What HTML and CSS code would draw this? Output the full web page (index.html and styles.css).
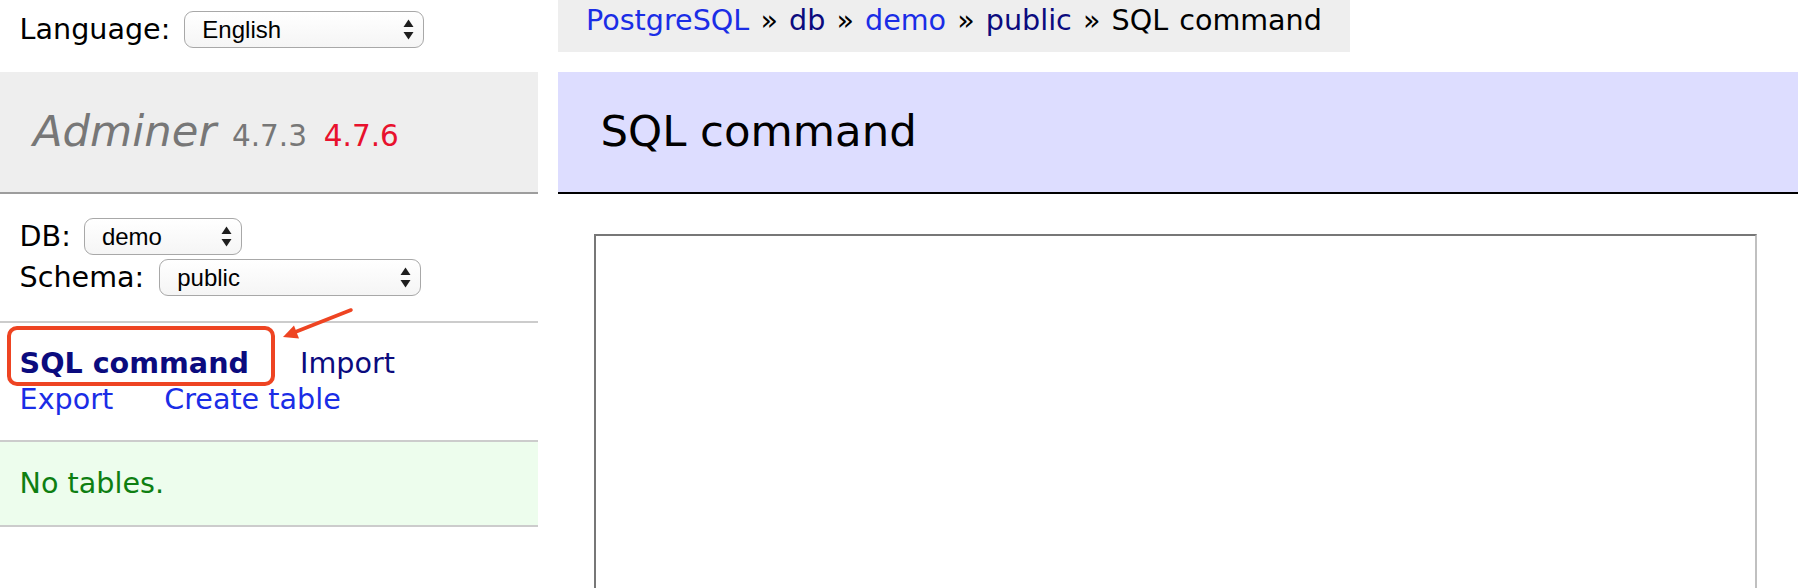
FILE: index.html
```html
<!DOCTYPE html>
<html lang="en">
<head>
<meta charset="utf-8">
<title>SQL command - Adminer</title>
<link rel="stylesheet" href="styles.css">
</head>
<body>
<div class="page">
  <aside class="menu">
    <div class="lang">
      <label class="lbl" for="lang">Language:</label>
      <span class="sel sel-lang">
        <select id="lang"><option>English</option></select>
        <svg class="updown" width="11" height="21" viewBox="0 0 11 21"><polygon points="0.5,8 5.5,0.5 10.5,8"/><polygon points="0.5,13 10.5,13 5.5,20.5"/></svg>
      </span>
    </div>
    <h1 class="brand"><span class="brand-name">Adminer</span> <span class="version">4.7.3</span> <a class="newver" href="#">4.7.6</a></h1>
    <div class="dbs">
      <div class="dbrow">
        <label for="db">DB:</label>
        <span class="sel sel-db">
          <select id="db"><option>demo</option></select>
          <svg class="updown" width="11" height="21" viewBox="0 0 11 21"><polygon points="0.5,8 5.5,0.5 10.5,8"/><polygon points="0.5,13 10.5,13 5.5,20.5"/></svg>
        </span>
      </div>
      <div class="dbrow">
        <label for="ns">Schema:</label>
        <span class="sel sel-schema">
          <select id="ns"><option>public</option></select>
          <svg class="updown" width="11" height="21" viewBox="0 0 11 21"><polygon points="0.5,8 5.5,0.5 10.5,8"/><polygon points="0.5,13 10.5,13 5.5,20.5"/></svg>
        </span>
      </div>
    </div>
    <p class="links">
      <a href="#" class="visited active">SQL command</a>
      <a href="#" class="visited">Import</a>
      <a href="#">Export</a>
      <a href="#">Create table</a>
    </p>
    <p class="message">No tables.</p>
  </aside>
  <main class="content">
    <div class="breadcrumb"><a href="#">PostgreSQL</a> » <a href="#" class="visited">db</a> » <a href="#">demo</a> » <a href="#" class="visited">public</a> » SQL command</div>
    <h2 class="title">SQL command</h2>
    <textarea class="sqlarea" aria-label="SQL command"></textarea>
  </main>
  <div class="annot-box"></div>
  <svg class="annot-arrow" width="90" height="45" viewBox="270 300 90 45">
    <line x1="351" y1="310" x2="294" y2="332.5" stroke="#ee4422" stroke-width="3.5" stroke-linecap="round"/>
    <polygon points="283,337 299,338.5 294,325.5" fill="#ee4422"/>
  </svg>
</div>
</body>
</html>
```
FILE: styles.css
```css
html, body {
  overflow: hidden;
}
body {
  margin: 0;
  background: #fff;
  color: #000;
  font-family: "DejaVu Sans", Verdana, sans-serif;
  font-size: 28.6px;
  line-height: 35.4px;
}
a {
  color: #1a2de6;
  text-decoration: none;
}
a.visited {
  color: #0b0b7e;
}
.page {
  position: relative;
  display: flex;
  align-items: flex-start;
  min-height: 588px;
}

/* ---------- left menu ---------- */
.menu {
  flex: none;
  width: 538px;
}
.lang {
  display: flex;
  align-items: center;
  gap: 14px;
  height: 37px;
  padding: 11px 0 23.7px 19.6px;
}
.sel {
  position: relative;
  display: inline-flex;
  align-items: center;
  height: 37px;
}
.sel select {
  -webkit-appearance: none;
  appearance: none;
  box-sizing: border-box;
  height: 37px;
  margin: 0;
  padding: 0 0 0 17px;
  border: 1.5px solid #a8a8a8;
  border-radius: 9px;
  background: linear-gradient(#ffffff, #f5f5f5);
  color: #000;
  font-family: "Liberation Sans", Arial, sans-serif;
  font-size: 24px;
}
.sel .updown {
  position: absolute;
  right: 10px;
  top: 8px;
  fill: #1e1e1e;
  pointer-events: none;
}
.sel-lang select { width: 240px; }
.sel-db select { width: 158px; }
.sel-schema select { width: 262px; }

.brand {
  margin: 0;
  padding: 33.5px 0 33.5px 33px;
  background: #eee;
  border-bottom: 2px solid #9d9d9d;
  color: #777;
  font-size: 43.3px;
  font-weight: normal;
  font-style: italic;
  line-height: 53px;
}
.brand .version,
.brand .newver {
  font-style: normal;
  font-size: 29.5px;
  line-height: 1;
}
.brand .version {
  color: #777;
  margin-left: 2px;
}
.brand .newver {
  color: #e8112d;
  margin-left: 3px;
}

.dbs {
  padding: 22.6px 0 22.6px 19.6px;
  border-bottom: 2px solid #ccc;
}
.dbrow {
  display: flex;
  align-items: center;
  gap: 13px;
  height: 41px;
}
.dbrow + .dbrow {
  gap: 15px;
}
.links {
  margin: 0;
  padding: 23.4px 28px 23.2px 19.6px;
  border-bottom: 2px solid #ccc;
  display: flex;
  flex-wrap: wrap;
  column-gap: 51px;
}
.links a {
  white-space: nowrap;
}
.links a.active {
  font-weight: bold;
}
.message {
  margin: 0;
  padding: 24px 19.6px 23.8px;
  background: #edfded;
  color: #0e7f12;
  border-bottom: 2px solid #ccc;
}

/* ---------- content ---------- */
.content {
  flex: 1;
  min-width: 0;
  margin-left: 56px;
  padding-right: 14px;
  display: flex;
  flex-direction: column;
}
.breadcrumb {
  align-self: flex-start;
  margin-left: -36px;
  height: 52px;
  padding: 0 28px;
  background: #eee;
  line-height: 40px;
  white-space: nowrap;
  word-spacing: 2px;
}
.title {
  margin: 19.7px 0 40.6px -36px;
  padding: 33.5px 42.45px;
  background: #ddf;
  border-bottom: 2px solid #000;
  font-size: 43.4px;
  font-weight: normal;
  line-height: 53px;
}
.sqlarea {
  display: block;
  box-sizing: border-box;
  width: 1163px;
  height: 420px;
  margin: 0;
  padding: 0;
  border-style: solid;
  border-width: 2px;
  border-color: #777 #c0c0c0 #c0c0c0 #777;
  background: #fff;
  resize: none;
}

/* ---------- annotation overlay ---------- */
.annot-box {
  position: absolute;
  left: 7px;
  top: 326px;
  width: 268px;
  height: 60px;
  box-sizing: border-box;
  border: 4px solid #ee4422;
  border-radius: 10px;
}
.annot-arrow {
  position: absolute;
  left: 270px;
  top: 300px;
}
```
